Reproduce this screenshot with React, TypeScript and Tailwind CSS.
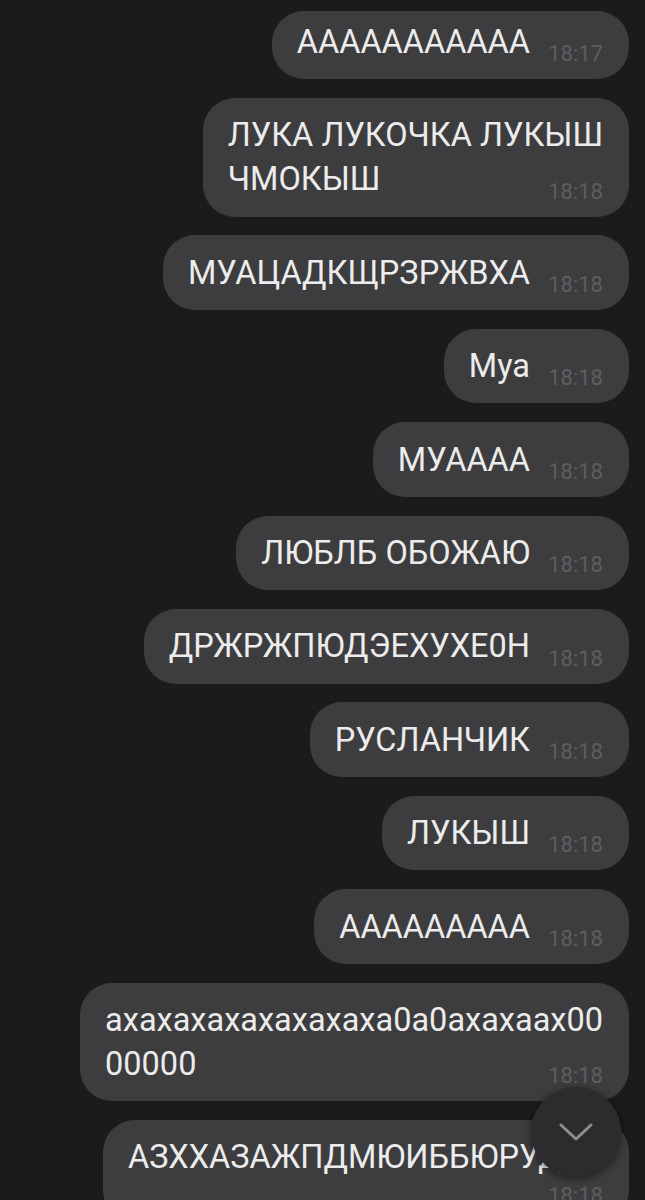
import React from 'react';

type Msg = { lines: string[]; time: string; first?: boolean };

const messages: Msg[] = [
  { lines: ['ААААААААААА'], time: '18:17', first: true },
  { lines: ['ЛУКА ЛУКОЧКА ЛУКЫШ', 'ЧМОКЫШ'], time: '18:18' },
  { lines: ['МУАЦАДКЩРЗРЖВХА'], time: '18:18' },
  { lines: ['Муа'], time: '18:18' },
  { lines: ['МУАААА'], time: '18:18' },
  { lines: ['ЛЮБЛБ ОБОЖАЮ'], time: '18:18' },
  { lines: ['ДРЖРЖПЮДЭЕХУХЕ0Н'], time: '18:18' },
  { lines: ['РУСЛАНЧИК'], time: '18:18' },
  { lines: ['ЛУКЫШ'], time: '18:18' },
  { lines: ['ААААААААА'], time: '18:18' },
  { lines: ['ахахахахахахахаха0а0ахахаах00', '00000'], time: '18:18' },
];

const Bubble = ({ lines, time, first }: Msg) => (
  <div
    className={
      'relative rounded-[32px] bg-[#3d3d3f] pl-[25px] pr-[26px] pb-[15.3px] text-[32.5px] leading-[44px] text-[#ececec] whitespace-nowrap ' +
      (first ? 'pt-[9px]' : 'pt-[15.3px]')
    }
  >
    {lines.map((line, i) => (
      <div key={i}>
        {line}
        {i === lines.length - 1 && <span className="inline-block w-[73px]" />}
      </div>
    ))}
    <span className="absolute right-[26px] bottom-[14px] text-[22px] leading-[22px] text-[#5e5e60]">
      {time}
    </span>
  </div>
);

const ScrollDown = () => (
  <button className="absolute left-[531px] top-[1087px] w-[90px] h-[90px] rounded-full bg-[#2c2c2e] shadow-[0_2px_8px_rgba(0,0,0,0.5)] flex items-center justify-center">
    <svg width="34" height="18" viewBox="0 0 34 18" fill="none">
      <path d="M2 2 L17 16 L32 2" stroke="#8e8e90" strokeWidth="3" strokeLinecap="round" strokeLinejoin="round" />
    </svg>
  </button>
);

export default function App() {
  return (
    <div className="relative h-[1200px] w-full overflow-hidden bg-[#1b1b1b] font-['Roboto',sans-serif]">
      <div className="flex flex-col items-end gap-[18.8px] pt-[11px] pr-[16px]">
        {messages.map((m, i) => (
          <Bubble key={i} {...m} />
        ))}
        <div className="w-[526px] rounded-[32px] bg-[#3d3d3f] pl-[25px] pr-[26px] pt-[15.3px] pb-[15px] text-[#ececec] whitespace-nowrap overflow-hidden">
          <div className="text-[32.5px] leading-[44px]">АЗХХАЗАЖПДМЮИББЮРУДЖ</div>
          <div className="mt-[6px] text-right text-[22px] leading-[22px] text-[#5e5e60]">18:18</div>
        </div>
      </div>
      <ScrollDown />
    </div>
  );
}
